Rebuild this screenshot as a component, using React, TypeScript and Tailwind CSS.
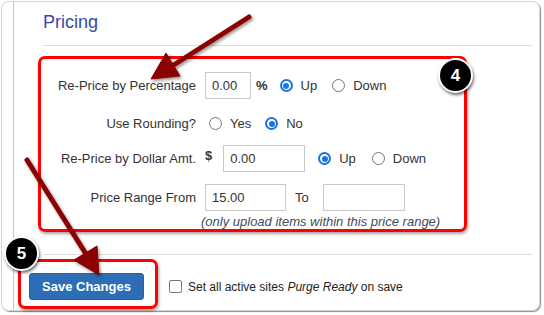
import React from 'react'

function Radio({ checked, label, className = '' }: { checked?: boolean; label: string; className?: string }) {
  return (
    <span className={`flex items-center ${className}`}>
      {checked ? (
        <span className="w-[13px] h-[13px] rounded-full border-2 border-[#1a73e8] flex items-center justify-center bg-white">
          <span className="w-[6px] h-[6px] rounded-full bg-[#1a73e8]" />
        </span>
      ) : (
        <span className="w-[13px] h-[13px] rounded-full border border-[#767676] bg-white" />
      )}
      <span className="ml-[8px]">{label}</span>
    </span>
  )
}

function Field({ value, w, className = '' }: { value?: string; w: string; className?: string }) {
  return (
    <div className={`${w} h-[27px] border border-[#c8c8c8] flex items-center px-[6px] text-[#333] ${className}`}>
      {value}
    </div>
  )
}

function Badge({ n, className }: { n: string; className: string }) {
  return (
    <div
      className={`absolute w-[35px] h-[35px] rounded-full bg-black border-2 border-white shadow-[1px_2px_3px_rgba(0,0,0,0.55)] flex items-center justify-center text-white font-bold text-[17px] ${className}`}
    >
      {n}
    </div>
  )
}

export default function App() {
  return (
    <div className="relative w-[544px] h-[315px] bg-white overflow-hidden font-['Liberation_Sans',Arial,sans-serif] text-[13px] text-[#333]">
      <div className="ml-[1px] mt-[1px] w-[539px] h-[310px] rounded-[8px] border border-[#d4d4d4] shadow-[1px_1px_1px_rgba(0,0,0,0.45)] flex overflow-hidden">
        <div className="w-[11px] shrink-0" />
        <div className="flex-1 border-l border-[#c4c4c4] flex flex-col">
          <div className="pl-[29px] pr-[7px]">
            <h2 className="pt-[9px] pb-[12px] leading-[22px] text-[18px] text-[#3949ab] border-b border-[#dddddd]">
              Pricing
            </h2>

            <div className="mt-[10px] -ml-[5px] w-[429px] rounded-[7px] border-[3px] border-[#ff0000] shadow-[1px_2px_3px_rgba(0,0,0,0.35)] pt-[13px]">
              <div className="flex items-center h-[27px]">
                <div className="w-[155px] text-right">Re-Price by Percentage</div>
                <Field value="0.00" w="w-[46px]" className="ml-[9px]" />
                <span className="ml-[5px] font-bold">%</span>
                <Radio checked label="Up" className="ml-[12px]" />
                <Radio label="Down" className="ml-[15px]" />
              </div>

              <div className="flex items-center h-[27px] mt-[11px]">
                <div className="w-[155px] text-right">Use Rounding?</div>
                <Radio label="Yes" className="ml-[13px]" />
                <Radio checked label="No" className="ml-[14px]" />
              </div>

              <div className="flex items-center h-[27px] mt-[8px]">
                <div className="w-[155px] text-right">Re-Price by Dollar Amt.</div>
                <span className="ml-[9px] mb-[6px] font-bold">$</span>
                <Field value="0.00" w="w-[82px]" className="ml-[11px]" />
                <Radio checked label="Up" className="ml-[13px]" />
                <Radio label="Down" className="ml-[16px]" />
              </div>

              <div className="flex items-center h-[27px] mt-[12px]">
                <div className="w-[155px] text-right">Price Range From</div>
                <Field value="15.00" w="w-[81px]" className="ml-[9px]" />
                <span className="ml-[9px]">To</span>
                <Field w="w-[82px]" className="ml-[14px]" />
              </div>

              <div className="mt-[3px] leading-[15px] pl-[160px] italic text-[#464a58]">
                (only upload items within this price range)
              </div>
            </div>

            <div className="mt-[22px] h-px bg-[#dddddd]" />
          </div>

          <div className="pl-[15px] pt-[18px] flex items-center">
            <button className="w-[115px] h-[27px] rounded-[3px] bg-[#2d6db6] border border-[#2862a6] text-white font-bold text-[13px]">
              Save Changes
            </button>
            <span className="ml-[25px] w-[13px] h-[13px] rounded-[2px] border border-[#767676] bg-white" />
            <span className="ml-[6px] text-[12px] text-[#222]">
              Set all active sites <i>Purge Ready</i> on save
            </span>
          </div>
        </div>
      </div>

      {/* annotations */}
      <div className="absolute left-[18px] top-[259px] w-[140px] h-[50px] rounded-[7px] border-[3px] border-[#ff0000] shadow-[1px_2px_3px_rgba(0,0,0,0.35)]" />

      <svg className="absolute inset-0 pointer-events-none" width="544" height="315" viewBox="0 0 544 315">
        <defs>
          <filter id="sh" x="-20%" y="-20%" width="140%" height="140%">
            <feDropShadow dx="1.5" dy="2" stdDeviation="1.5" floodColor="#000" floodOpacity="0.4" />
          </filter>
        </defs>
        <g filter="url(#sh)" fill="#8b0000" stroke="#8b0000">
          <line x1="249" y1="17" x2="172" y2="66" strokeWidth="5" strokeLinecap="round" />
          <polygon points="151,79 180,76 166,53" strokeWidth="1" strokeLinejoin="round" />
          <line x1="27" y1="160" x2="86" y2="254" strokeWidth="5" strokeLinecap="round" />
          <polygon points="99,275 97,246 74,260" strokeWidth="1" strokeLinejoin="round" />
        </g>
      </svg>

      <Badge n="4" className="left-[438px] top-[58px]" />
      <Badge n="5" className="left-[4px] top-[236px]" />
    </div>
  )
}
